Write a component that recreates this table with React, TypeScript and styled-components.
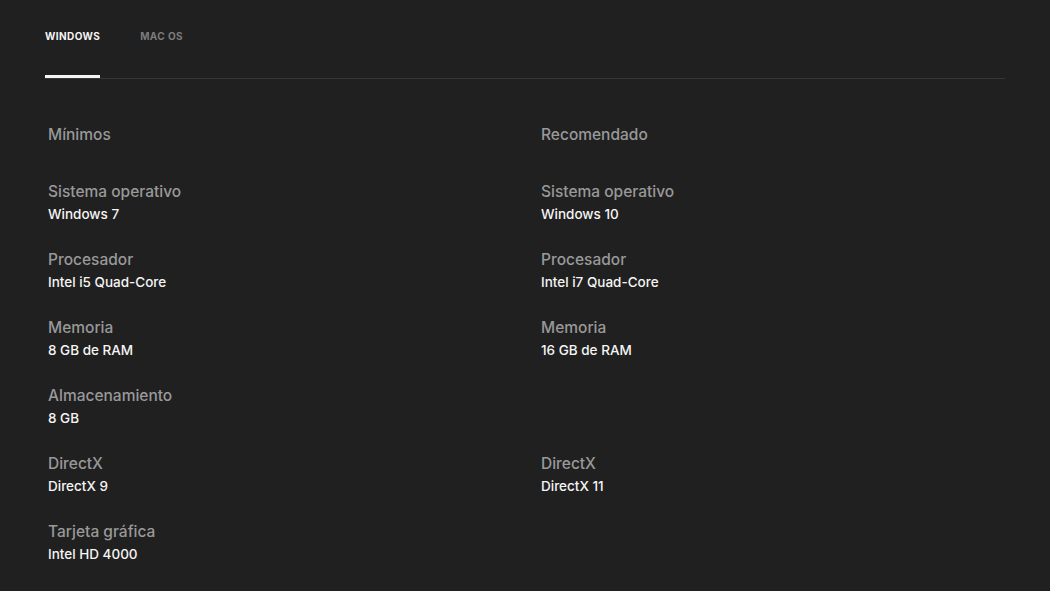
import styled, { createGlobalStyle } from "styled-components";

type Spec = {
  label: string;
  min?: string;
  rec?: string;
};

const specs: Spec[] = [
  { label: "Sistema operativo", min: "Windows 7", rec: "Windows 10" },
  { label: "Procesador", min: "Intel i5 Quad-Core", rec: "Intel i7 Quad-Core" },
  { label: "Memoria", min: "8 GB de RAM", rec: "16 GB de RAM" },
  { label: "Almacenamiento", min: "8 GB" },
  { label: "DirectX", min: "DirectX 9", rec: "DirectX 11" },
  { label: "Tarjeta gráfica", min: "Intel HD 4000" },
];

export default function App() {
  return (
    <>
      <GlobalStyle />
      <Page>
        <Tabs>
          <Tab $active>Windows</Tab>
          <Tab>Mac OS</Tab>
        </Tabs>
        <Grid>
          <Heading>Mínimos</Heading>
          <Heading>Recomendado</Heading>
          {specs.map((s) => (
            <Row key={s.label}>
              <Cell>
                {s.min && (
                  <>
                    <Label>{s.label}</Label>
                    <Value>{s.min}</Value>
                  </>
                )}
              </Cell>
              <Cell>
                {s.rec && (
                  <>
                    <Label>{s.label}</Label>
                    <Value>{s.rec}</Value>
                  </>
                )}
              </Cell>
            </Row>
          ))}
        </Grid>
      </Page>
    </>
  );
}

const GlobalStyle = createGlobalStyle`
  html, body {
    margin: 0;
    background: #202020;
  }
  body {
    font-family: Inter, "Noto Sans", sans-serif;
    -webkit-font-smoothing: antialiased;
  }
`;

const Page = styled.div`
  width: 960px;
  padding: 0 45px;
  min-height: 591px;
  box-sizing: content-box;
`;

const Tabs = styled.div`
  display: flex;
  gap: 40px;
  border-bottom: 1px solid #363636;
  height: 78px;
`;

const Tab = styled.div<{ $active?: boolean }>`
  display: flex;
  align-items: center;
  height: 100%;
  padding-bottom: 6px;
  box-sizing: border-box;
  font-size: 10px;
  font-weight: 700;
  letter-spacing: 0.04em;
  text-transform: uppercase;
  color: ${(p) => (p.$active ? "#f5f5f5" : "#7c7c7c")};
  box-shadow: ${(p) => (p.$active ? "inset 0 -3px 0 #f5f5f5" : "none")};
`;

const Grid = styled.div`
  display: grid;
  grid-template-columns: 493px 1fr;
  padding: 45px 0 0 3px;
`;

const Heading = styled.div`
  font-size: 15.5px;
  line-height: 22px;
  font-weight: 500;
  color: #999999;
  margin-bottom: 35px;
`;

const Row = styled.div`
  display: contents;
`;

const Cell = styled.div`
  display: flex;
  flex-direction: column;
  height: 68px;
`;

const Label = styled.div`
  font-size: 15.5px;
  line-height: 22px;
  font-weight: 500;
  color: #999999;
`;

const Value = styled.div`
  font-size: 13.5px;
  line-height: 23px;
  font-weight: 500;
  color: #f5f5f5;
`;
